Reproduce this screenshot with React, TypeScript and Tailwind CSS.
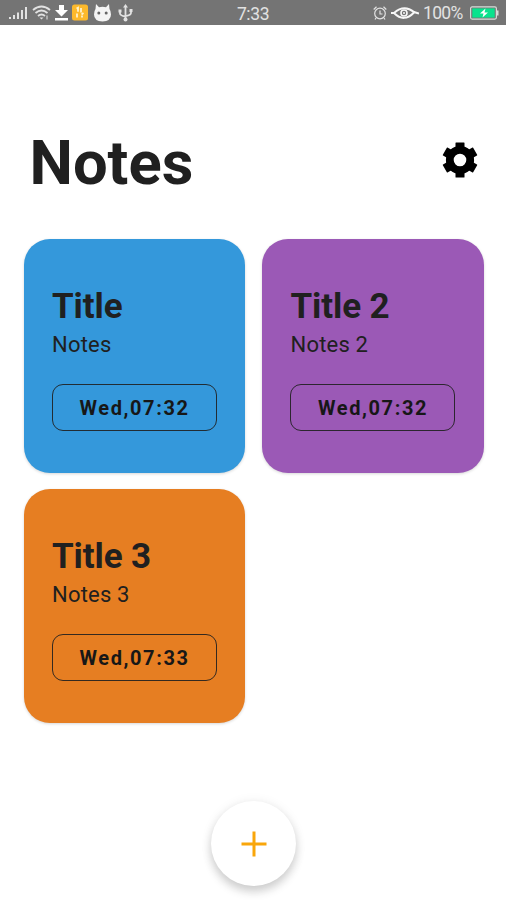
import React from "react";

type Note = { title: string; body: string; date: string; color: string };

const notes: Note[] = [
  { title: "Title", body: "Notes", date: "Wed,07:32", color: "bg-[#3498db]" },
  { title: "Title 2", body: "Notes 2", date: "Wed,07:32", color: "bg-[#9b59b6]" },
  { title: "Title 3", body: "Notes 3", date: "Wed,07:33", color: "bg-[#e67e22]" },
];

function StatusBar() {
  return (
    <div className="grid h-[25px] grid-cols-[1fr_auto_1fr] items-center bg-[#747474] text-[#e2e2e2]">
      <div className="flex items-center pl-[9px]">
        <svg width="19" height="14" viewBox="0 0 19 14" fill="currentColor">
          <path d="M0 11h2v2H0zM4 9h2v4H4zM8 6.500h2V13H8zM12 4h2v9h-2zM16 1h2v12h-2z" />
        </svg>
        <svg className="ml-[4px]" width="19" height="17" viewBox="0 0 19 17" fill="none" stroke="currentColor" strokeWidth="1.800">
          <path d="M1 6Q9.500-1 18 6M3.500 9Q9.500 4 15.500 9M6 12Q9.500 9 13 12" />
          <path d="M7.500 13.500h4l-2 2z" fill="currentColor" stroke="none" />
          <path d="M15 11.500v4" strokeWidth="1" />
        </svg>
        <svg className="ml-[3px]" width="15" height="16" viewBox="0 0 15 16" fill="#fff">
          <path d="M5 0h5v5h4l-6.500 6.500L1 5h4zM1 13h13v2.500H1z" />
        </svg>
        <svg className="ml-[3px]" width="16" height="17" viewBox="0 0 16 17">
          <rect y=".5" width="16" height="16" rx="2.500" fill="#fdb92c" />
          <path d="M4.500 4.500l1.500-.8v4M5 9.500v4M9 4v4.500M9.500 10.500l2-1.500M10 11.500v2" stroke="#fff2cd" strokeWidth="1.800" fill="none" />
        </svg>
        <svg className="ml-[5px]" width="19" height="18" viewBox="0 0 19 18">
          <path d="M3 0l3 3.200Q9.500 2.300 13 3.200L16 0l.5 5Q18 7 18 10.500 18 17 9.500 17.500 1 17 1 10.500 1 7 2.500 5z" fill="#f4f4f4" />
          <circle cx="5.800" cy="9" r="1.500" fill="#666" />
          <circle cx="13.200" cy="9" r="1.500" fill="#666" />
        </svg>
        <svg className="ml-[6px]" width="15" height="18" viewBox="0 0 15 18" fill="none" stroke="currentColor" strokeWidth="1.800">
          <path d="M7.500 15V2M2 7v2.500q0 2 5.500 3M13 6v3q0 2-5.500 3.200" />
          <path d="M7.500 0l2.500 3.500H5zM.5 5.500h3v3h-3zM11.500 5h3v3h-3z" fill="currentColor" stroke="none" />
          <circle cx="7.500" cy="15.500" r="2" fill="currentColor" stroke="none" />
        </svg>
      </div>
      <span className="pt-[2px] text-[17.500px] leading-[22px] tracking-[-0.4px]">7:33</span>
      <div className="flex items-center justify-end pr-[7px]">
        <svg width="14" height="14" viewBox="0 0 14 14" fill="none" stroke="currentColor" strokeWidth="1.200">
          <circle cx="7" cy="7.500" r="5.300" />
          <path d="M7 4.500V8h2.500M.7 3.500L3.500.8M13.300 3.500L10.500.8M3 12l-1 1.500M11 12l1 1.500" />
        </svg>
        <svg className="ml-[4px]" width="28" height="14" viewBox="0 0 28 14" fill="none" stroke="#f7f7f7">
          <path d="M0 7h3Q13-2 23 6l5 1.500M3 7q10 10 20-.5" strokeWidth="2" />
          <circle cx="13" cy="7" r="3" strokeWidth="1.600" />
          <circle cx="13" cy="7" r="1" fill="#f7f7f7" stroke="none" />
        </svg>
        <span className="ml-[4px] w-[40px] whitespace-nowrap pt-[1px] text-[17.500px] leading-[22px] tracking-[-0.7px]">100%</span>
        <svg className="ml-[7px]" width="29" height="14" viewBox="0 0 29 14">
          <rect x=".6" y=".9" width="25.800" height="12.200" rx="1.500" fill="#747474" stroke="#d4ddd8" strokeWidth="1.200" />
          <rect x="2.300" y="2.400" width="22.400" height="9.200" fill="#08e38d" />
          <path d="M27 4.500h1.500v5H27z" fill="#d4ddd8" />
          <path d="M15.500 2.500L10 7.500h3.500l-1 4L18 6.500h-3.500z" fill="#fff" />
        </svg>
      </div>
    </div>
  );
}

const teeth = [0, 60, 120, 180, 240, 300];

function Gear() {
  return (
    <svg width="36" height="36" viewBox="-18 -18 36 36">
      <circle r="10.200" fill="none" stroke="#000" strokeWidth="7.800" />
      {teeth.map((angle) => (
        <path
          key={angle}
          transform={`rotate(${angle})`}
          d="M-4-17.500h8q.5 0 .5.500v4.500L7-10H-7l2.500-2.500V-17q0-.5.5-.5z"
        />
      ))}
    </svg>
  );
}

function NoteCard({ note }: { note: Note }) {
  return (
    <article className={`flex h-[234px] flex-col rounded-[26px] px-[28px] pt-[47px] shadow-[0_1px_3px_rgba(0,0,0,0.16)] ${note.color}`}>
      <h2 className="pl-[0.5px] text-[35px] font-bold leading-[42px] tracking-[-0.1px]">{note.title}</h2>
      <p className="mt-[4px] pl-[0.5px] text-[22px] leading-[26px] tracking-[0.2px]">{note.body}</p>
      <time className="mt-[26px] flex h-[47px] w-[165px] items-center justify-center rounded-[11px] border border-[#202020]/90 pl-[1px] pt-[1px] text-[20px] font-bold tracking-[1.6px] text-[#171717]">
        {note.date}
      </time>
    </article>
  );
}

export default function App() {
  return (
    <div className="flex h-[900px] w-[506px] flex-col overflow-hidden bg-white font-['Roboto',sans-serif] text-[#202020]">
      <StatusBar />
      <header className="mt-[100px] flex h-[76px] items-center justify-between pl-[29.500px] pr-[28px]">
        <h1 className="text-[61.5px] font-bold leading-[76px]">Notes</h1>
        <button className="-mt-[6px] text-black" aria-label="Settings">
          <Gear />
        </button>
      </header>
      <main className="mt-[38px] grid grid-cols-[221.5px_221.5px] gap-x-[17px] gap-y-[16px] pl-[23.5px]">
        {notes.map((note) => <NoteCard key={note.title} note={note} />)}
      </main>
      <footer className="mt-[78px] flex justify-center pl-[1px]">
        <button aria-label="Add note" className="flex size-[85px] items-center justify-center rounded-full bg-white shadow-[0_6px_10px_rgba(0,0,0,0.16),0_1px_12px_rgba(0,0,0,0.08)]">
          <svg width="26" height="26" viewBox="0 0 26 26" stroke="#f9a60a" strokeWidth="3" fill="none">
            <path d="M13 .5v25M.5 13h25" />
          </svg>
        </button>
      </footer>
    </div>
  );
}
